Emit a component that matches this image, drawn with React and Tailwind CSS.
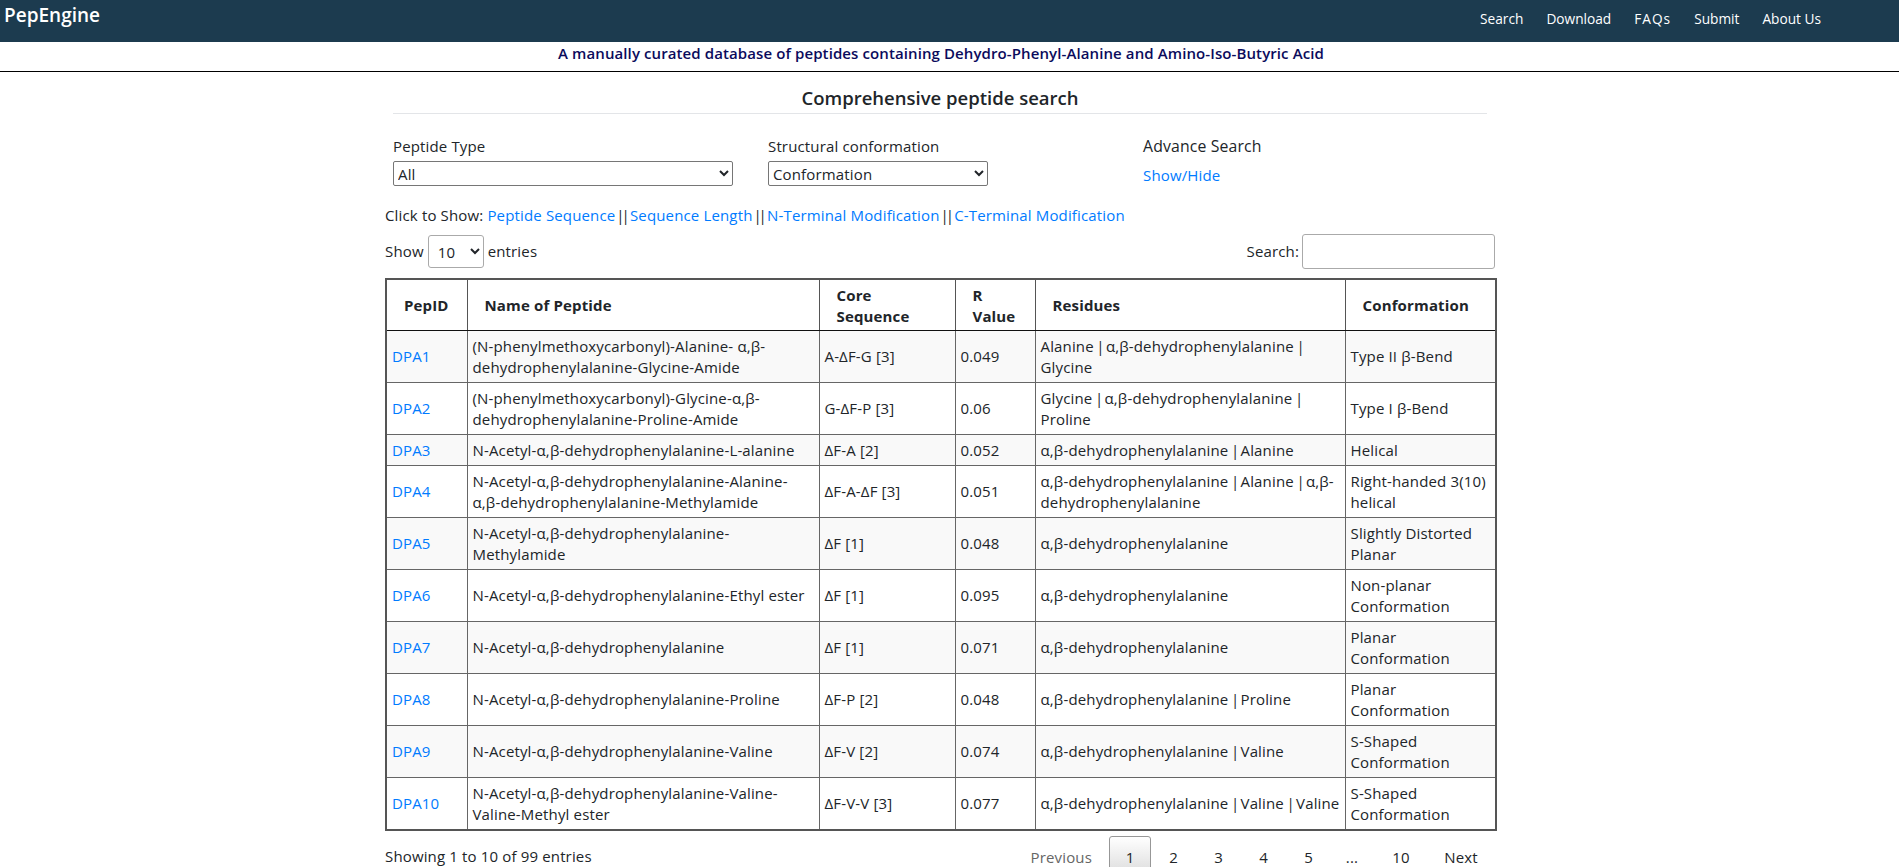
const rows = [
  ["DPA1", "(N-phenylmethoxycarbonyl)-Alanine- α,β-dehydrophenylalanine-Glycine-Amide", "A-ΔF-G [3]", "0.049", "Alanine | α,β-dehydrophenylalanine | Glycine", "Type II β-Bend"],
  ["DPA2", "(N-phenylmethoxycarbonyl)-Glycine-α,β-dehydrophenylalanine-Proline-Amide", "G-ΔF-P [3]", "0.06", "Glycine | α,β-dehydrophenylalanine | Proline", "Type I β-Bend"],
  ["DPA3", "N-Acetyl-α,β-dehydrophenylalanine-L-alanine", "ΔF-A [2]", "0.052", "α,β-dehydrophenylalanine | Alanine", "Helical"],
  ["DPA4", "N-Acetyl-α,β-dehydrophenylalanine-Alanine-α,β-dehydrophenylalanine-Methylamide", "ΔF-A-ΔF [3]", "0.051", "α,β-dehydrophenylalanine | Alanine | α,β-dehydrophenylalanine", "Right-handed 3(10) helical"],
  ["DPA5", "N-Acetyl-α,β-dehydrophenylalanine-Methylamide", "ΔF [1]", "0.048", "α,β-dehydrophenylalanine", "Slightly Distorted Planar"],
  ["DPA6", "N-Acetyl-α,β-dehydrophenylalanine-Ethyl ester", "ΔF [1]", "0.095", "α,β-dehydrophenylalanine", "Non-planar Conformation"],
  ["DPA7", "N-Acetyl-α,β-dehydrophenylalanine", "ΔF [1]", "0.071", "α,β-dehydrophenylalanine", "Planar Conformation"],
  ["DPA8", "N-Acetyl-α,β-dehydrophenylalanine-Proline", "ΔF-P [2]", "0.048", "α,β-dehydrophenylalanine | Proline", "Planar Conformation"],
  ["DPA9", "N-Acetyl-α,β-dehydrophenylalanine-Valine", "ΔF-V [2]", "0.074", "α,β-dehydrophenylalanine | Valine", "S-Shaped Conformation"],
  ["DPA10", "N-Acetyl-α,β-dehydrophenylalanine-Valine-Valine-Methyl ester", "ΔF-V-V [3]", "0.077", "α,β-dehydrophenylalanine | Valine | Valine", "S-Shaped Conformation"],
];
const link = "text-[#007bff]";
const th = "border border-[#555] border-b-[#111] pt-[4.5px] pb-[3.5px] pl-[17px] pr-[28px] text-left font-bold align-middle";
const td = "border border-[#666] px-[5px] py-[4.5px] align-middle";

function Piped({ text }) {
  const parts = text.split(" | ");
  return parts.map((p, i) => (
    <span key={i}>
      {i > 0 && <span className="tracking-[-1.3px]">{" | "}</span>}
      {p.split(/(?<=β-)/).map((s, j) => <span key={j}>{s}</span>)}
    </span>
  ));
}

function DoubleBar() {
  return <><span className="tracking-[-3px]">{" ||"}</span><span className="tracking-[-0.7px]">{" "}</span></>;
}

export default function App() {
  return (
    <div className="min-h-[867px] h-[867px] overflow-hidden bg-white text-[15px] leading-[21px] text-[#212529] font-['Open_Sans','Noto_Sans',sans-serif] tracking-[0.15px]">
      <header className="h-[42px] bg-[#1c3b4f] text-white flex justify-between items-start">
        <div className="pl-[4px] pt-[2px] text-[19px] leading-[27px] font-semibold tracking-normal">PepEngine</div>
        <nav className="flex gap-[23px] pr-[78px] pt-[9px] text-[13.7px] leading-[20px] tracking-normal">
          <span>Search</span><span>Download</span><span className="tracking-[1px]">FAQs</span><span>Submit</span><span>About Us</span>
        </nav>
      </header>
      <div className="h-[30px] pr-[17px] border-b border-black text-center text-[15px] leading-[21px] font-semibold text-[#0b0b5c] pt-[1px] tracking-[0.1px]">
        A manually curated database of peptides containing Dehydro-Phenyl-Alanine and Amino-Iso-Butyric Acid
      </div>
      <main className="ml-[385px] w-[1112px]">
        <div className="ml-[8px] w-[1094px] mt-[12px] border-b border-[#e3e5e8] text-center text-[18.5px] leading-[27px] font-semibold pb-[2px] tracking-normal">
          Comprehensive peptide search
        </div>
        <div className="flex ml-[8px] mt-[22px]">
          <div className="w-[375px]">
            <div className="leading-[21px]">Peptide Type</div>
            <select className="block mt-[4px] w-[340px] h-[25px] border border-[#767676] rounded-[2px]"><option>All</option></select>
          </div>
          <div className="w-[375px]">
            <div className="leading-[21px]">Structural conformation</div>
            <select className="block mt-[4px] w-[220px] h-[25px] border border-[#767676] rounded-[2px]"><option>Conformation</option></select>
          </div>
          <div>
            <div className="text-[15.8px] leading-[21px]">Advance Search</div>
            <div className={`${link} mt-[8px]`}>Show/Hide</div>
          </div>
        </div>
        <div className="mt-[19px]">
          Click to Show: <span className={link}>Peptide Sequence</span><DoubleBar /><span className={link}>Sequence Length</span><DoubleBar /><span className={link}>N-Terminal Modification</span><DoubleBar /><span className={link}>C-Terminal Modification</span>
        </div>
        <div className="flex justify-between items-center mt-[8px] mb-[9px] h-[35px]">
          <div className="flex items-center gap-[3px]">
            Show
            <select className="w-[56px] h-[33px] border border-[#aaa] rounded-[3px] pl-[5px] ml-[1px] mr-[1px]"><option>10</option></select>
            entries
          </div>
          <div className="flex items-center gap-[3px] pr-[2px]">
            Search:
            <input className="w-[193px] h-[35px] border border-[#aaa] rounded-[3px]" />
          </div>
        </div>
        <table className="w-[1110px] table-fixed border-collapse border-2 border-[#555]">
          <colgroup>
            <col className="w-[81px]" /><col className="w-[352px]" /><col className="w-[136px]" /><col className="w-[80px]" /><col className="w-[310px]" /><col className="w-[151px]" />
          </colgroup>
          <thead>
            <tr>
              <th className={th}>PepID</th>
              <th className={th}>Name of Peptide</th>
              <th className={th}>Core Sequence</th>
              <th className={th}>R Value</th>
              <th className={th}>Residues</th>
              <th className={th}>Conformation</th>
            </tr>
          </thead>
          <tbody>
            {rows.map((r, i) => (
              <tr key={r[0]} className={i % 2 === 0 ? "bg-[#f9f9f9]" : "bg-white"}>
                <td className={`${td} ${link}`}>{r[0]}</td>
                <td className={td}>{r[1]}</td>
                <td className={td}>{r[2]}</td>
                <td className={td}>{r[3]}</td>
                <td className={td}><Piped text={r[4]} /></td>
                <td className={td}>{r[5]}</td>
              </tr>
            ))}
          </tbody>
        </table>
        <div className="flex justify-between mt-[5px]">
          <div className="pt-[10px]">Showing 1 to 10 of 99 entries</div>
          <div className="flex items-start pr-[4px]">
            <span className="px-[17px] pt-[11px] text-[#666]">Previous</span>
            <span className="w-[42px] h-[40px] border border-[#979797] rounded-[3px] bg-gradient-to-b from-white to-[#dcdcdc] text-center pt-[10px]">1</span>
            {["2","3","4","5"].map(p => <span key={p} className="w-[45px] text-center pt-[11px]">{p}</span>)}
            <span className="w-[42px] text-center pt-[11px]">...</span>
            <span className="w-[56px] text-center pt-[11px]">10</span>
            <span className="w-[64px] text-center pt-[11px]">Next</span>
          </div>
        </div>
      </main>
    </div>
  );
}
